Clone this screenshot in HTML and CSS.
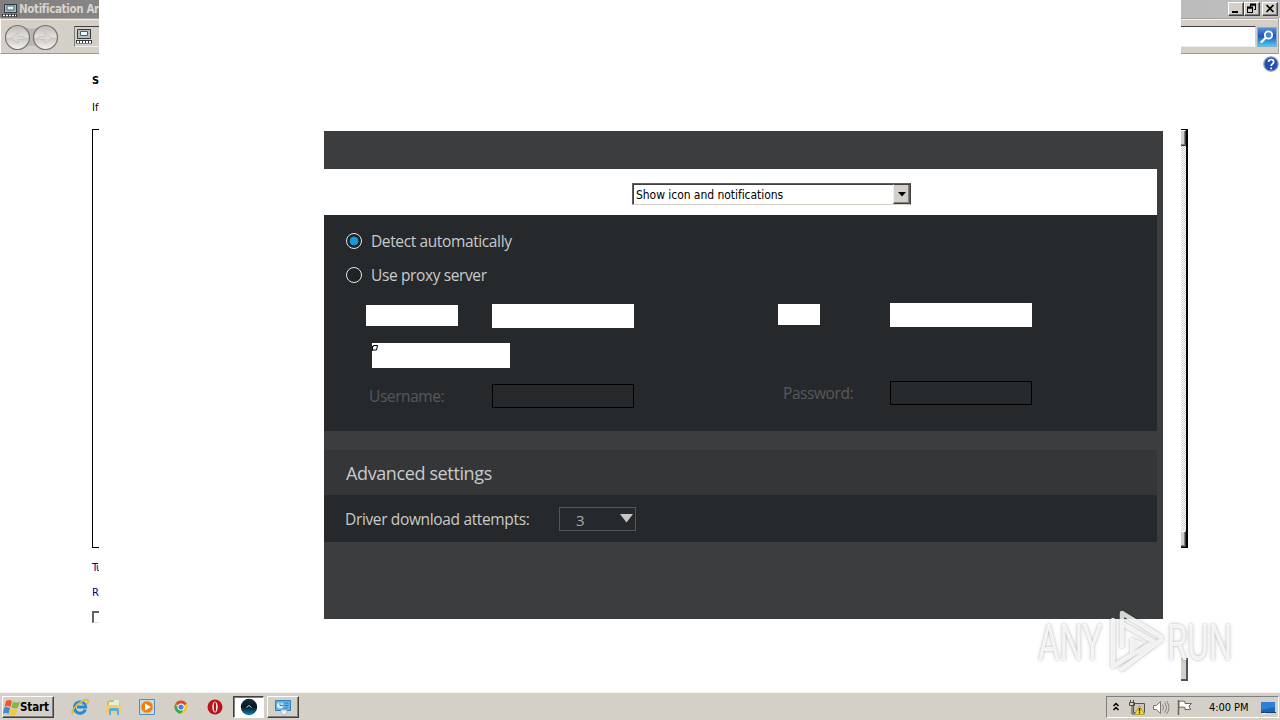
FILE: index.html
```html
<!DOCTYPE html>
<html lang="en">
<head>
<meta charset="utf-8">
<title>Notification Area Icons</title>
<link rel="stylesheet" href="styles.css">
</head>
<body>
<div class="desktop">
  <header class="titlebar">
    <svg class="title-icon" width="16" height="16" viewBox="0 0 16 16"><path d="M2 2h13v9H2z" fill="#303c42"/><path d="M3 3h11v7H3z" fill="#a9b8bd"/><path d="M5 4h7v4H5z" fill="#e4f7fc" stroke="#48656f"/><path d="M0 12h15v3H0z" fill="#303638"/><path d="M1 13.500h13" stroke="#fff" stroke-width="1.500" stroke-dasharray="2 1"/></svg>
    <span class="title-text">Notification Area Icons</span>
    <div class="window-buttons">
      <span class="win-btn"><svg width="14" height="12"><path d="M3 9h6" stroke="#000" stroke-width="2"/></svg></span>
      <span class="win-btn"><svg width="14" height="12"><path d="M5.500 1v3M5 2h6M10.500 1v6M9 6.500h2M2.500 4v6M2 5h6M7.500 4v6M2 9.500h6" stroke="#000" fill="none"/><path d="M5 1.500h6M2 4.500h6" stroke="#000" stroke-width="2"/></svg></span>
      <span class="win-btn win-close"><svg width="14" height="12"><path d="M3.500 2l7 7M10.500 2l-7 7" stroke="#000" stroke-width="1.700"/></svg></span>
    </div>
  </header>
  <nav class="toolbar">
    <svg class="nav-arrows" width="60" height="30" viewBox="0 0 60 30">
      <defs><linearGradient id="orb" x2="0" y2="1"><stop stop-color="#bdb9b5"/><stop offset=".48" stop-color="#e3e0dd"/><stop offset=".53" stop-color="#cbc8c4"/><stop offset="1" stop-color="#f5f4f2"/></linearGradient></defs>
      <path d="M17 3q14 5 28 0v22q-14-5-28 0z" fill="#bab6b0"/>
      <circle cx="17.500" cy="14.500" r="12" fill="url(#orb)" stroke="#777470" stroke-width="1.200"/>
      <circle cx="45.500" cy="14.500" r="12" fill="url(#orb)" stroke="#777470" stroke-width="1.200"/>
      <path d="M24 13.500h-6v-4L11 15l7 5.500v-4h6zM39 13.500h6v-4l7 5.500-7 5.500v-4h-6z" fill="#dad7d3" stroke="#c2beba" stroke-width=".7"/>
    </svg>
    <div class="address">
      <svg width="18" height="17" viewBox="0 0 18 17"><path d="M2.500 1.500h13v9h-13z" fill="#b6bbbb" stroke="#343b3e"/><path d="M5.500 3.500h7v4h-7z" fill="#e9faff" stroke="#43606b"/><path d="M1 12h16v3.500H1z" fill="#343b3e"/><path d="M2 14h14" stroke="#fff" stroke-width="2" stroke-dasharray="2 1"/></svg>
    </div>
    <svg class="search" width="20" height="20" viewBox="0 0 20 20"><defs><linearGradient id="sea" x2="0" y2="1"><stop stop-color="#5794da"/><stop offset=".45" stop-color="#2352bc"/><stop offset="1" stop-color="#42d6f5"/></linearGradient></defs><path d="M.5.500h19v19H.5z" fill="url(#sea)" stroke="#8ba8cf"/><circle cx="11.500" cy="8" r="3.700" fill="#4e83d2" stroke="#fff" stroke-width="1.800"/><path d="M8.500 11L4.500 15" stroke="#fff" stroke-width="2.300" stroke-linecap="round"/></svg>
  </nav>
  <main class="page">
    <div class="help"><svg width="16" height="16" viewBox="0 0 16 16"><circle cx="8" cy="8" r="7.200" fill="#244fae" stroke="#8c9fc7" stroke-width="1.300"/><path d="M5.500 6q.2-2.500 2.700-2.500T10.700 6q0 1-1.400 2Q8.200 8.700 8.200 10M8.200 11.500v1.700" stroke="#fff" stroke-width="1.700" fill="none"/></svg></div>
    <h1 class="heading">Select which icons and notifications appear on the taskbar</h1>
    <p class="hint">If you choose to hide icons and notifications, you won't be notified</p>
    <section class="icon-list">
      <div class="scrollbar"><i class="scroll-btn"></i><i class="scroll-btn"></i></div>
    </section>
    <p class="link link-first">Turn system icons on or off</p>
    <p class="link link-restore">Restore default icon behaviors</p>
    <div class="foot"><i class="checkbox"></i></div>
  </main>
  <footer class="taskbar">
    <div class="start"><svg width="18" height="17" viewBox="0 0 18 17"><path d="M3 2q3-2 6 0L7.500 8q-3-2-6 0z" fill="#ed592c"/><path d="M10 2.500q3 2 7 0L15 8.500q-3 2-6.500 0z" fill="#80b943"/><path d="M1 9q3-2 6 0l-1.500 6q-3-2-5.500 0z" fill="#4589cf"/><path d="M8 9.500q3 2 7 0l-2 6q-3 2-6.500 0z" fill="#f7c831"/></svg><b>Start</b></div>
    <div class="tasks">
      <span class="task"><svg width="18" height="18" viewBox="0 0 18 18"><path d="M14.300 11.500A5.600 5.600 0 1 1 14.600 9H6" fill="none" stroke="#278bd1" stroke-width="3"/><path d="M5 8q1-3 4-3t4 3" fill="none" stroke="#79caed"/><path d="M2 16Q-1 14 6 7q8-7 11-5 1 1-1 4" fill="none" stroke="#e9b82f" stroke-width="1.700"/></svg></span>
      <span class="task"><svg width="18" height="18" viewBox="0 0 18 18"><path d="M2 3h5l1 2h7v10H2z" fill="#e3b84b"/><path d="M4 2h10v6H4z" fill="#e9f0d1"/><path d="M4 3h5" stroke="#56a363"/><path d="M1 7h15v8H1z" fill="#f0cd75"/><path d="M4 17v-5q0-2 2-2h6q2 0 2 2v5h-2v-4H6v4z" fill="#5aaddc"/></svg></span>
      <span class="task"><svg width="18" height="18" viewBox="0 0 18 18"><path d="M1.500 1.500h15v15h-15z" fill="#bfe1f5" stroke="#4a92c4"/><circle cx="9" cy="9" r="6" fill="#ef7d13" stroke="#f8b457"/><path d="M7 5.500v7L13 9z" fill="#fff"/></svg></span>
      <span class="task"><svg width="16" height="16" viewBox="0 0 16 16"><circle cx="8" cy="8" r="6.500" fill="#f4c52c"/><path d="M8 8L2.300 4.800A6.500 6.500 0 0 1 13.700 4.800z" fill="#df4737"/><path d="M2.300 4.800A6.500 6.500 0 0 0 8 14.500l3-5H5z" fill="#3ba354"/><circle cx="8" cy="8" r="3.500" fill="#fff"/><circle cx="8" cy="8" r="2.600" fill="#4683de"/></svg></span>
      <span class="task"><svg width="18" height="18" viewBox="0 0 18 18"><circle cx="9" cy="9" r="7.500" fill="#b8141b"/><ellipse cx="9" cy="9" rx="2.700" ry="5.600" fill="#f0e9e6"/><ellipse cx="9" cy="9" rx="1.100" ry="4.900" fill="#b8141b"/></svg></span>
      <span class="task task-active"><svg width="18" height="18" viewBox="0 0 18 18"><defs><linearGradient id="drv" x2="0" y2="1"><stop stop-color="#152c39"/><stop offset=".5" stop-color="#061925"/><stop offset="1" stop-color="#1682ac"/></linearGradient></defs><circle cx="9" cy="9" r="8.200" fill="url(#drv)"/><path d="M6.500 9.500L9 7.500l2.500 2" stroke="#b5dae4" fill="none"/></svg></span>
      <span class="task task-raised"><svg width="18" height="18" viewBox="0 0 18 18"><path d="M1.500 2.500h15v10h-15z" fill="#65b4e3" stroke="#307fb6"/><circle cx="6" cy="7.500" r="3" fill="#d8f2ff"/><path d="M6 4.500v3h3M10.500 5h4M10.500 7.500h4M10.500 10h3" stroke="#267bb5" fill="none"/><path d="M7 12h6v2l-2 3H9l-2-3z" fill="#f0f4f6" stroke="#91aab7" stroke-width=".7"/></svg></span>
    </div>
    <div class="tray">
      <svg class="tray-more" width="10" height="12" viewBox="0 0 10 12"><path d="M2.500 5L5 2.500 7.500 5M2.500 9L5 6.500 7.500 9" fill="none" stroke="#000" stroke-width="1.500"/></svg>
      <svg class="tray-net" width="18" height="17" viewBox="0 0 18 17"><path d="M5.500 4.500h11v9h-11z" fill="#c8c6be" stroke="#55534c"/><path d="M1.500 3.500h5v3h-5zM2.500 1v3M5.500 1v3M4 7v8h3" fill="none" stroke="#4f4d47"/><path d="M11.500 6.500L16.500 15.500h-10z" fill="#f5d923" stroke="#a38d18" stroke-width=".7"/><path d="M11.500 9v3.500M11.500 13.300v1.200" stroke="#222" stroke-width="1.400"/></svg>
      <svg class="tray-vol" width="18" height="17" viewBox="0 0 18 17"><path d="M1.500 6.500h3l4-4v12l-4-4h-3z" fill="#fff" stroke="#77756f"/><path d="M10.500 5.500q2 3 0 6M12.500 3.500q4 5 0 10M14.500 2q5 6.500 0 13" fill="none" stroke="#84817a"/></svg>
      <svg class="tray-flag" width="17" height="17" viewBox="0 0 17 17"><path d="M2.500 1v15" stroke="#68665f" stroke-width="1.500"/><path d="M3 2.500q3-1 6 0v2h6.500L13 7l1.500 3.500H9v-2q-3-1-6 0z" fill="#fff" stroke="#68665f"/></svg>
      <span class="clock">4:00 PM</span>
      <svg class="tray-desk" width="16" height="15" viewBox="0 0 16 15"><path d="M1 2h14v10H1z" fill="#1965bb"/><path d="M1 2h14v5L1 10z" fill="#2f80d4"/><path d="M1 12.500h15" stroke="#193f71"/><path d="M2 13.500h4" stroke="#fff"/></svg>
    </div>
  </footer>

  <div class="app-window">
    <div class="panel">
      <div class="select-row">
        <div class="classic-select"><span>Show icon and notifications</span><i class="classic-arrow"><svg width="8" height="5"><path d="M0 0h8L4 4.500z"/></svg></i></div>
      </div>
      <section class="proxy">
        <div class="radio-row"><i class="radio radio-on"></i><span class="label">Detect automatically</span></div>
        <div class="radio-row"><i class="radio"></i><span class="label">Use proxy server</span></div>
        <div class="fields">
          <div class="field-group">
            <div class="row row-address"><i class="block address-label"></i><i class="block field"></i></div>
            <i class="block auth-label"><svg width="7" height="8"><path d="M.5 2v4.500M0 6h3M2 1.500h3.500L4.500 6H3M2 1L.5 3.500" fill="none" stroke="#000"/></svg></i>
            <div class="row row-user"><span class="muted t-user">Username:</span><i class="field outline"></i></div>
          </div>
          <div class="field-group group-right">
            <div class="row row-port"><i class="block port-label"></i><i class="block field"></i></div>
            <div class="row row-pass"><span class="muted t-pass">Password:</span><i class="field outline"></i></div>
          </div>
        </div>
      </section>
      <section class="advanced">
        <h2 class="advanced-head"><span>Advanced settings</span></h2>
        <div class="attempts"><span class="t-attempts">Driver download attempts:</span><div class="number-select"><span>3</span><svg width="13" height="9"><path d="M0 0h13L6.500 8.500z" fill="#c5c6c6"/></svg></div></div>
      </section>
    </div>
  </div>
  <div class="edge-fragment"></div>
  <svg class="watermark" width="240" height="90" viewBox="0 0 240 90">
    <g fill="#fff" fill-opacity=".8">
      <text class="wm-text" transform="translate(6 56) scale(.66 1)">ANY</text>
      <text class="wm-text" transform="translate(135 56) scale(.66 1)">RUN</text>
    </g>
    <g class="wm-mark" fill="none" stroke="#fff" stroke-width="4.500" stroke-linejoin="round" stroke-linecap="round">
      <path d="M90 42V9l39 24v3L90 65M81 16v46l41-24L91 20"/>
      <path d="M98 33v17l14-11z" fill="#fff" stroke="none"/>
    </g>
  </svg>
</div>
</body>
</html>
```

FILE: styles.css
```css
* { box-sizing: border-box; }
body { margin: 0; background: #fff; }
h1, h2, p { margin: 0; font-weight: normal; }
i { font-style: normal; display: block; flex: none; }
svg { display: block; flex: none; }
.desktop { position: relative; width: 1280px; height: 720px; overflow: hidden; background: #fff; display: flex; flex-direction: column; font: 11px "DejaVu Sans", sans-serif; white-space: nowrap; }

.titlebar { height: 18px; flex: none; display: flex; align-items: center; padding: 0 2px; gap: 1px; background: linear-gradient(90deg, #808080, #c0c0c0); }
.title-icon { margin-top: 1px; }
.title-text { color: #d8d5ce; font: bold 11.500px "DejaVu Sans Condensed", sans-serif; letter-spacing: -.35px; }
.window-buttons { margin-left: auto; display: flex; }
.win-btn { width: 16px; height: 14px; background: #d4d0c8; border: 1px solid; border-color: #fff #404040 #404040 #fff; box-shadow: inset -1px -1px #808080; }
.win-close { margin-left: 2px; }
.toolbar { height: 36px; flex: none; display: flex; align-items: center; background: #d4d0c8; border: 1px solid #aaa69f; border-left-color: #fff; border-bottom: 1px solid #9d9992; padding-right: 1px; margin-right: 1px; box-shadow: inset 0 1px #f2f0ed; }
.nav-arrows { margin-left: -1px; margin-top: 3px; }
.address { flex: 1; height: 21px; margin: 0 1px 0 14px; background: #fff; border: 1px solid #808080; border-top-color: #404040; border-right-color: #d4d0c8; border-bottom-color: #eee; }
.address svg { width: 24px; height: 19px; padding-right: 6px; background: #d4d0c8; }
.search { margin-top: 1px; }

.page { flex: 1; min-height: 0; padding: 0 92px; display: flex; flex-direction: column; background: #fff; }
.help { height: 20px; display: flex; justify-content: flex-end; margin-right: -91px; padding-top: 2px; }
.heading { font: bold 11px/14px "DejaVu Sans Condensed", sans-serif; color: #000; }
.hint { font: 11px/14px "DejaVu Sans Condensed", sans-serif; margin-top: 13px; }
.icon-list { height: 419px; margin-top: 14px; border: 1px solid #000; border-right-width: 2px; display: flex; justify-content: flex-end; flex: none; }
.scrollbar { width: 16px; display: flex; flex-direction: column; justify-content: space-between; background: repeating-conic-gradient(#d4d0c8 0 25%, #fff 0 50%) 0 0 / 2px 2px; }
.scroll-btn { height: 16px; background: #d4d0c8; border: 1px solid; border-color: #fff #404040 #404040 #fff; box-shadow: inset -1px -1px #808080; }
.link { font: 11px/14px "DejaVu Sans Condensed", sans-serif; color: #00007c; letter-spacing: -.3px; margin-top: 11px; }
.link-first { margin-top: 13px; }
.link-restore { letter-spacing: .4px; }
.foot { display: flex; margin-top: 11px; }
.checkbox { width: 12px; height: 12px; border: 2px solid #606060; border-bottom: 1px solid #ddd; border-right-color: #ddd; }

.taskbar { height: 28px; flex: none; background: #d4d0c8; display: flex; align-items: flex-start; padding: 4px 1px 0 2px; box-shadow: inset 0 1px #f7f6f3; }
.start { width: 52px; height: 22px; display: flex; align-items: center; border: 1px solid; border-color: #fff #404040 #404040 #fff; box-shadow: inset -1px -1px #808080; background: #d4d0c8; font: bold 11.500px "DejaVu Sans Condensed", sans-serif; letter-spacing: -.1px; }
.start b { margin-left: -1px; }
.tasks { display: flex; margin-left: 9px; }
.task { width: 33.700px; height: 22px; display: flex; justify-content: center; align-items: center; }
.task-active { width: 31px; margin-left: 1.500px; padding-left: 2px; background: #fff; border: 1px solid; border-color: #404040 #fff #fff #404040; box-shadow: inset 1px 1px #808080; }
.task-raised { width: 32px; margin-left: 3px; border: 1px solid; border-color: #fff #404040 #404040 #fff; box-shadow: inset -1px -1px #808080; }
.tray { margin-left: auto; width: 173px; height: 22px; display: flex; align-items: center; border: 1px solid; border-color: #808080 #fff #fff #808080; padding-left: 4px; }
.tray-net { margin-left: 7px; }
.tray-vol { margin-left: 6px; }
.tray-flag { margin-left: 6px; }
.clock { margin-left: 16px; width: 41px; font: 11px "DejaVu Sans Condensed", sans-serif; letter-spacing: -.05px; }
.tray-desk { margin-left: auto; margin-right: 2px; }

.app-window { position: absolute; left: 99px; top: 0; width: 1082px; height: 692px; background: #fff; padding: 131px 18px 0 225px; }
.panel { height: 488px; background: #3b3d3f; padding: 38px 6px 0 0; font-family: "Open Sans", sans-serif; color: #c9caca; }
.select-row { height: 46px; background: #fff; padding: 14px 0 0 308px; }
.classic-select { width: 279px; height: 22px; display: flex; justify-content: space-between; align-items: center; border: 1px solid; border-color: #606060 #404040 #d4d0c8 #606060; box-shadow: inset 1px 1px #404040; padding: 1px 0 0 3px; color: #000; font: 12px "DejaVu Sans Condensed", sans-serif; letter-spacing: -.05px; }
.classic-arrow { width: 17px; height: 20px; margin-top: -1px; display: flex; justify-content: center; align-items: center; background: #d4d0c8; border: 1px solid; border-color: #404040 #606060 #404040 #eee; box-shadow: inset -1px -1px #808080; }
.proxy { height: 216px; background: #26292b; padding-top: 9px; }
.radio-row { height: 34px; display: flex; align-items: center; padding-left: 22px; gap: 9px; font-size: 15.500px; letter-spacing: -.38px; }
.label { margin-top: -1px; }
.radio { width: 16px; height: 16px; border: 1.500px solid #e6e7e7; border-radius: 50%; background: #202326; }
.radio-on { background: radial-gradient(circle, #129bda 0 4px, #202326 4.700px); }
.fields { display: flex; padding: 11px 0 0 42px; }
.field-group { width: 412px; flex: none; }
.group-right { width: 254px; }
.row { display: flex; align-items: center; }
.block { background: #fff; }
.field { width: 142px; height: 24px; }
.outline { border: 1px solid #000; }
.row-address { gap: 34px; margin-top: 1px; }
.address-label { width: 92px; height: 21px; margin-top: -1px; }
.auth-label { width: 138px; height: 25px; margin: 15px 0 0 6px; padding-top: 1px; }
.muted { color: #57595b; font-size: 15.500px; letter-spacing: -.42px; line-height: 24px; height: 24px; }
.t-user { width: 123px; }
.row-port { gap: 70px; }
.port-label { width: 42px; height: 21px; margin-top: -1px; }
.row-user, .row-pass { height: 24px; }
.row-user { margin-top: 16px; padding-left: 3px; }
.row-pass { margin-top: 54px; padding-left: 5px; }
.t-pass { width: 107px; }
.advanced { margin-top: 19px; }
.advanced-head { height: 45px; line-height: 47px; padding-left: 22px; background: #343638; font-size: 18px; letter-spacing: -.38px; }
.attempts { height: 47px; background: #26292b; display: flex; align-items: center; padding: 1px 0 0 21px; font-size: 15.500px; letter-spacing: -.35px; }
.t-attempts { width: 214px; }
.number-select { width: 77px; height: 24px; border: 1px solid #54575a; display: flex; justify-content: space-between; align-items: center; padding: 0 2px 0 16px; }
.number-select svg { margin-top: -2px; }
.number-select span { color: #aaa; margin-top: 2px; font-size: 15px; }
.edge-fragment { position: absolute; left: 1181px; top: 658px; width: 7px; height: 23px; background: #d4d0c8; border: solid #555; border-width: 0 2px 2px 0; }
.watermark { position: absolute; left: 1032px; top: 604px; filter: drop-shadow(0 0 1px rgba(0,0,0,.25)) drop-shadow(0 0 2px rgba(0,0,0,.16)); }
.wm-text { font: 50px "Roboto", sans-serif; }
.wm-mark { opacity: .8; }
```
